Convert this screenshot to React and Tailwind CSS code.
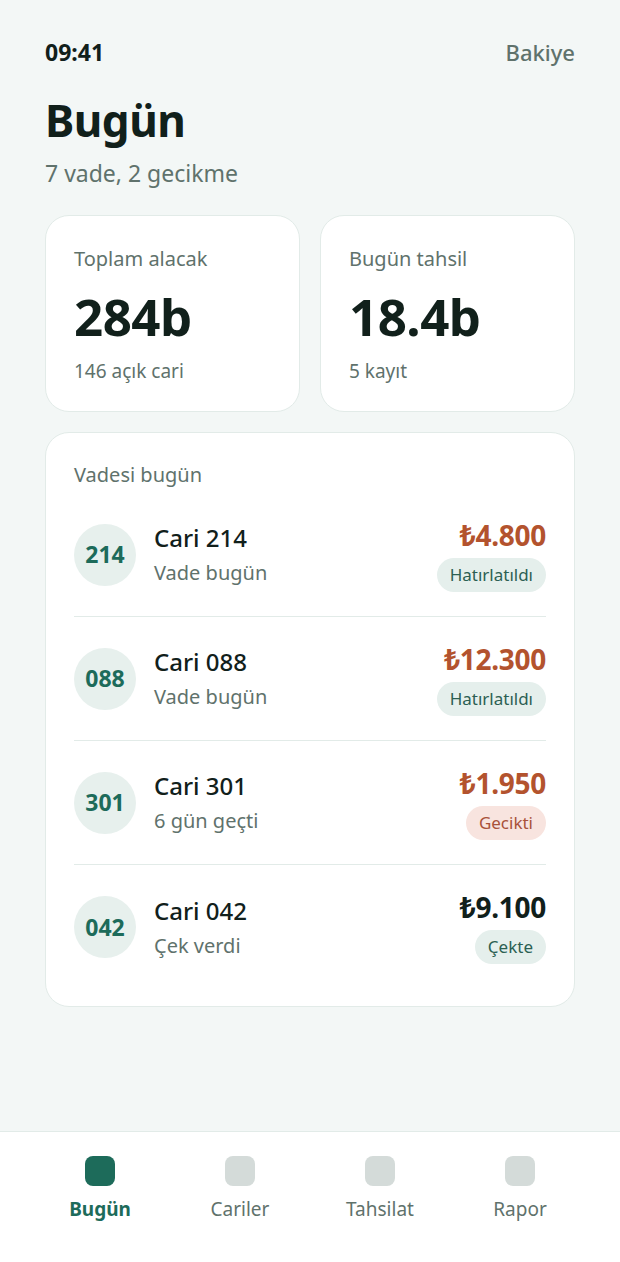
import React from 'react';

const rows = [
  { id: '214', name: 'Cari 214', note: 'Vade bugün', amount: '₺4.800', tone: 'red', badge: 'Hatırlatıldı', badgeTone: 'green' },
  { id: '088', name: 'Cari 088', note: 'Vade bugün', amount: '₺12.300', tone: 'red', badge: 'Hatırlatıldı', badgeTone: 'green' },
  { id: '301', name: 'Cari 301', note: '6 gün geçti', amount: '₺1.950', tone: 'red', badge: 'Gecikti', badgeTone: 'red' },
  { id: '042', name: 'Cari 042', note: 'Çek verdi', amount: '₺9.100', tone: 'dark', badge: 'Çekte', badgeTone: 'green' },
];

const tabs = [
  { label: 'Bugün', active: true },
  { label: 'Cariler' },
  { label: 'Tahsilat' },
  { label: 'Rapor' },
];

const StatCard = ({ label, value, sub }) => (
  <div className="flex-1 bg-white rounded-[24px] border border-[#e2ebe8] px-[28px] pt-[29px] pb-[27px]">
    <p className="text-[20px] leading-[28px] text-[#5f726c]">{label}</p>
    <p className="mt-[15px] text-[51px] leading-[56px] font-bold text-[#11201b] tracking-[-0.5px]">{value}</p>
    <p className="mt-[14px] text-[19px] leading-[26px] text-[#5f726c]">{sub}</p>
  </div>
);

const Row = ({ row, last }) => (
  <div className={`flex items-center h-[124px] ${last ? '' : 'border-b border-[#e2ebe8]'}`}>
    <div className="w-[62px] h-[62px] rounded-full bg-[#e7f0ed] flex items-center justify-center text-[23px] font-bold text-[#1d6b5a]">
      {row.id}
    </div>
    <div className="ml-[18px] flex-1">
      <p className="text-[24px] leading-[32px] font-medium text-[#11201b]">{row.name}</p>
      <p className="mt-[5px] text-[20px] leading-[28px] text-[#5f726c]">{row.note}</p>
    </div>
    <div className="flex flex-col items-end">
      <p className={`text-[28px] leading-[34px] font-bold tracking-[-0.3px] ${row.tone === 'red' ? 'text-[#b3532e]' : 'text-[#11201b]'}`}>{row.amount}</p>
      <span
        className={`mt-[6px] h-[34px] px-[13px] rounded-full flex items-center text-[17px] ${
          row.badgeTone === 'red' ? 'bg-[#f8e4df] text-[#a9523a]' : 'bg-[#e5efec] text-[#2c5f53]'
        }`}
      >
        {row.badge}
      </span>
    </div>
  </div>
);

export default function App() {
  return (
    <div className="min-h-[1262px] bg-[#f3f7f6] flex flex-col font-['Noto_Sans',sans-serif]">
      <div className="flex-1 px-[45px]">
        <div className="flex justify-between items-center pt-[36px] h-[68px]">
          <span className="text-[23px] font-bold text-[#11201b]">09:41</span>
          <span className="text-[22px] font-medium text-[#5f726c]">Bakiye</span>
        </div>
        <h1 className="mt-[24px] text-[44px] leading-[56px] font-bold text-[#11201b] tracking-[-0.5px]">Bugün</h1>
        <p className="mt-[10px] text-[23px] leading-[30px] text-[#5f726c]">7 vade, 2 gecikme</p>

        <div className="mt-[27px] flex gap-[20px]">
          <StatCard label="Toplam alacak" value="284b" sub="146 açık cari" />
          <StatCard label="Bugün tahsil" value="18.4b" sub="5 kayıt" />
        </div>

        <div className="mt-[20px] bg-white rounded-[24px] border border-[#e2ebe8] px-[28px] pt-[28px] pb-[17px]">
          <p className="text-[20px] leading-[28px] text-[#5f726c]">Vadesi bugün</p>
          <div className="mt-[4px]">
            {rows.map((row, i) => (
              <Row key={row.id} row={row} last={i === rows.length - 1} />
            ))}
          </div>
        </div>
      </div>

      <div className="h-[131px] bg-white border-t border-[#e2ebe8] px-[30px] grid grid-cols-4">
        {tabs.map((tab) => (
          <div key={tab.label} className="flex flex-col items-center pt-[24px]">
            <div className={`w-[30px] h-[30px] rounded-[8px] ${tab.active ? 'bg-[#1d6b5a]' : 'bg-[#d4dbd9]'}`} />
            <span className={`mt-[10px] text-[19px] leading-[26px] ${tab.active ? 'font-bold text-[#1d6b5a]' : 'text-[#5f726c]'}`}>
              {tab.label}
            </span>
          </div>
        ))}
      </div>
    </div>
  );
}
